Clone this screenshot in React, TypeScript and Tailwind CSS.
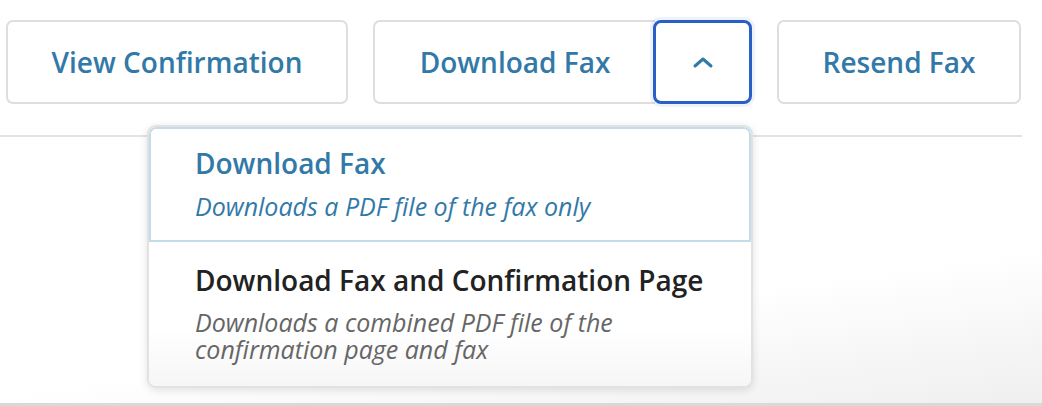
import React from "react";

const font = { fontFamily: '"Open Sans", "Noto Sans", sans-serif' };

export default function App() {
  return (
    <div
      className="relative w-[1042px] h-[406px] overflow-hidden bg-[linear-gradient(172deg,#ffffff_0%,#ffffff_72%,#efefef_100%)] border-b-[3px] border-[#d9d9d9]"
      style={font}
    >
      <div className="flex items-start pt-[20px] pl-[6px] gap-[25px]">
        <button className="w-[342px] h-[84px] rounded-[7px] border-2 border-[#dedede] bg-white text-[28px] font-semibold text-[#3279a8] flex items-center justify-center">
          View Confirmation
        </button>
        <div className="flex">
          <button className="w-[282px] h-[84px] rounded-l-[7px] border-2 border-r-0 border-[#dedede] bg-white text-[28px] font-semibold text-[#3279a8] flex items-center justify-center">
            Download Fax
          </button>
          <button className="-ml-[2px] w-[99px] h-[84px] rounded-[8px] border-[3px] border-[#2a5fc6] bg-white flex items-center justify-center shadow-[0_0_0_3px_rgba(42,95,198,0.08)]">
            <svg width="22" height="14" viewBox="0 0 22 14" fill="none">
              <path d="M3 11 L11 4 L19 11" stroke="#3279a8" strokeWidth="3" strokeLinecap="round" strokeLinejoin="round" />
            </svg>
          </button>
        </div>
        <button className="w-[244px] h-[84px] rounded-[7px] border-2 border-[#dedede] bg-white text-[28px] font-semibold text-[#3279a8] flex items-center justify-center">
          Resend Fax
        </button>
      </div>
      <div className="mt-[31px] w-[1022px] h-[2px] bg-[#e3e3e3]" />

      <div className="absolute left-[147px] top-[125px] w-[606px] rounded-[9px] border-2 border-[#e2e2e2] bg-white shadow-[0_2px_8px_rgba(0,0,0,0.12)] overflow-hidden">
        <div className="rounded-t-[7px] border-2 border-[#c4dce9] bg-white pl-[44px] pt-[17px] pb-[20px]">
          <div className="text-[28px] leading-[34px] font-semibold text-[#3279a8]">Download Fax</div>
          <div className="mt-[12px] text-[25px] leading-[28px] italic text-[#3279a8]">
            Downloads a PDF file of the fax only
          </div>
        </div>
        <div className="bg-[linear-gradient(180deg,#ffffff_0%,#ffffff_60%,#f6f6f6_100%)] pl-[46px] pt-[21px] pb-[23px]">
          <div className="text-[28px] leading-[34px] font-semibold text-[#222222]">
            Download Fax and Confirmation Page
          </div>
          <div className="mt-[12px] text-[25px] leading-[27px] italic text-[#666666] w-[480px]">
            Downloads a combined PDF file of the confirmation page and fax
          </div>
        </div>
      </div>
    </div>
  );
}
